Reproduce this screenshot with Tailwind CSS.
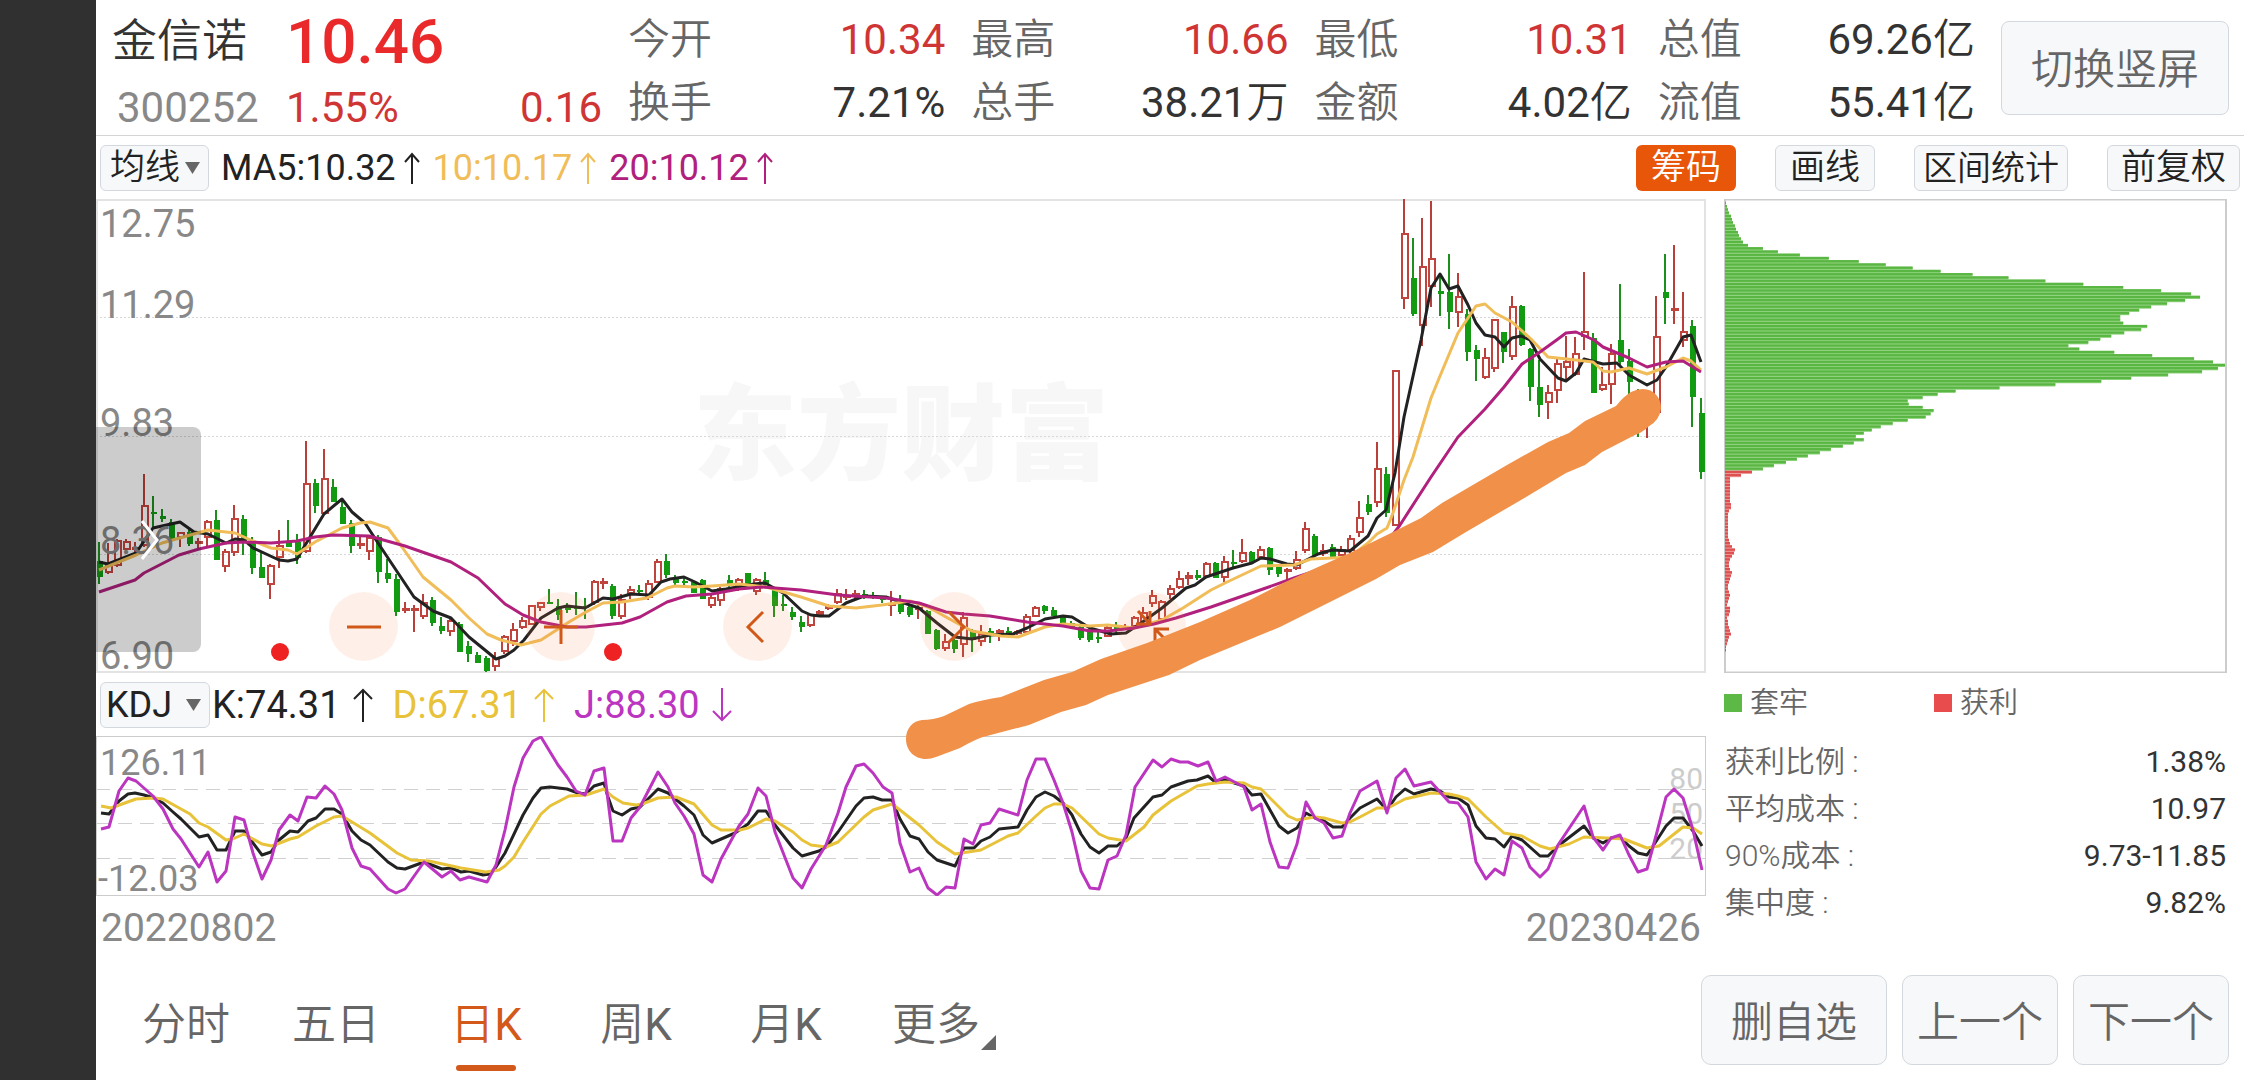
<!DOCTYPE html>
<html lang="zh-CN">
<head>
    <meta charset="UTF-8">
    <meta name="viewport" content="width=device-width, initial-scale=1.0">
    <title>金信诺 300252 - 日K</title>
    <script src="https://cdn.jsdelivr.net/npm/@tailwindcss/browser@4"></script>
    <style>
        body {
            font-family: Roboto, "Noto Sans CJK SC", sans-serif;
        }
    </style>
</head>
<body class="flex min-h-screen bg-white leading-none text-[#333]">

    <!-- 左侧黑边 -->
    <aside class="w-24 shrink-0 bg-[#303030]"></aside>

    <main class="flex min-w-0 flex-1 flex-col">

        <!-- 行情头部 -->
        <header class="flex h-[136px] items-center border-b border-[#d4d4d4] pr-[15px] pl-4">
            <div class="grid w-[490px] shrink-0 grid-cols-[174px_1fr_auto] grid-rows-[72px_60px] items-center pt-2 text-[42px]">
                <h1 class="text-[45px] font-[350]">金信诺</h1>
                <div class="col-span-2 text-[62px] font-medium text-[#ea2a2a]">10.46</div>
                <div class="pl-[5px] text-[#888]">300252</div>
                <div class="text-[#cf3535]">1.55%</div>
                <div class="text-[#cf3535]">0.16</div>
            </div>
            <dl class="ml-[26px] grid flex-1 grid-cols-4 grid-rows-[63px_63px] gap-x-[26px] pt-2 text-[42px]">
                <div class="flex items-center justify-between"><dt class="font-[350] text-[#666]">今开</dt><dd class="text-[#cf3535]">10.34</dd></div>
                <div class="flex items-center justify-between"><dt class="font-[350] text-[#666]">最高</dt><dd class="text-[#cf3535]">10.66</dd></div>
                <div class="flex items-center justify-between"><dt class="font-[350] text-[#666]">最低</dt><dd class="text-[#cf3535]">10.31</dd></div>
                <div class="flex items-center justify-between"><dt class="font-[350] text-[#666]">总值</dt><dd>69.26<span class="font-[350]">亿</span></dd></div>
                <div class="flex items-center justify-between"><dt class="font-[350] text-[#666]">换手</dt><dd>7.21%</dd></div>
                <div class="flex items-center justify-between"><dt class="font-[350] text-[#666]">总手</dt><dd>38.21<span class="font-[350]">万</span></dd></div>
                <div class="flex items-center justify-between"><dt class="font-[350] text-[#666]">金额</dt><dd>4.02<span class="font-[350]">亿</span></dd></div>
                <div class="flex items-center justify-between"><dt class="font-[350] text-[#666]">流值</dt><dd>55.41<span class="font-[350]">亿</span></dd></div>
            </dl>
            <button class="ml-[26px] h-[94px] w-[228px] shrink-0 rounded-lg border border-[#d3d8de] bg-[#f7f8fa] pt-1 text-[42px] font-[350] text-[#666]">切换竖屏</button>
        </header>

        <!-- 均线指标与工具按钮 -->
        <div class="flex h-[63px] items-center pr-1 pl-1">
            <div class="relative">
                <select aria-label="主图指标" class="h-[46px] w-[109px] appearance-none rounded-md border border-[#d3d8de] bg-[#f7f8fa] pl-[9px] text-[35px] leading-[44px] font-[350] text-[#222]">
                    <option>均线</option>
                </select>
                <svg class="pointer-events-none absolute top-[17px] right-[9px] h-3 w-[15px]" viewBox="0 0 15 12"><path d="M0 0h15L7.500 12z" fill="#666"/></svg>
            </div>
            <div class="ml-3 flex items-center text-[36px]">
                <span class="text-[#222]">MA5:10.32</span>
                <svg class="mr-[13px] ml-2 h-8 w-4" viewBox="0 0 16 32" fill="none" stroke="#222" stroke-width="2"><path d="M8 32V2M1 10l7-8 7 8"/></svg>
                <span class="text-[#f0bd58]">10:10.17</span>
                <svg class="mr-[13px] ml-2 h-8 w-4" viewBox="0 0 16 32" fill="none" stroke="#f0bd58" stroke-width="2"><path d="M8 32V2M1 10l7-8 7 8"/></svg>
                <span class="text-[#b0207c]">20:10.12</span>
                <svg class="ml-2 h-8 w-4" viewBox="0 0 16 32" fill="none" stroke="#b0207c" stroke-width="2"><path d="M8 32V2M1 10l7-8 7 8"/></svg>
            </div>
            <div class="ml-auto flex gap-[39px] text-[35px] font-[350] text-[#222]">
                <button class="h-[46px] w-[100px] rounded-md bg-[#e8560a] text-white">筹码</button>
                <button class="h-[46px] w-[100px] rounded-md border border-[#d3d8de] bg-[#f7f8fa]">画线</button>
                <button class="h-[46px] w-[154px] rounded-md border border-[#d3d8de] bg-[#f7f8fa] text-[34px]">区间统计</button>
                <button class="h-[46px] w-[133px] rounded-md border border-[#d3d8de] bg-[#f7f8fa]">前复权</button>
            </div>
        </div>

        <div class="grid grid-cols-[1610fr_503fr] gap-x-[18px] pr-[17px]">

            <!-- 左侧: K线 + KDJ -->
            <section class="min-w-0">
                <div class="relative">
                    <div class="relative h-[474px]">
                        <div class="absolute inset-x-0 top-[186px] text-center text-[104px] font-black text-[#f7f7f7]">东方财富</div>
                        <svg id="kline" class="absolute inset-0 h-full w-full" viewBox="0 0 1610 474" preserveAspectRatio="none" fill="none">
                            <g stroke="#d8d8d8" stroke-dasharray="2 2"><path d="M0 118.500H1610M0 237.500H1610M0 355.500H1610"/></g>
                            <rect x="1" y="1" width="1608" height="472" stroke="#e3e3e3" stroke-width="2"/>
                        </svg>
                        <div class="absolute inset-0 text-[38px] text-[#888]">
                            <span class="absolute top-[6px] left-1">12.75</span>
                            <span class="absolute top-[87px] left-1">11.29</span>
                            <span class="absolute top-[205px] left-1">9.83</span>
                            <span class="absolute top-[323px] left-1">8.36</span>
                            <span class="absolute top-[438px] left-1">6.90</span>
                        </div>
                        <button aria-label="展开" class="absolute top-[228px] left-0 flex h-[225px] w-[105px] items-center rounded-r-lg bg-black/20 pl-[45px]">
                            <svg class="h-10 w-[18px]" viewBox="0 0 18 40" fill="none" stroke="#fff" stroke-width="3"><path d="M1 1l15 19L1 39"/></svg>
                        </button>
                        <span class="absolute top-[444px] left-[175px] size-[18px] rounded-full bg-[#ee2222]"></span>
                        <span class="absolute top-[444px] left-[508px] size-[18px] rounded-full bg-[#ee2222]"></span>
                        <!-- 缩放 / 平移 -->
                        <div class="absolute top-[393px] left-[233px] flex gap-[128px] text-[#d0591a]">
                            <button aria-label="缩小" class="flex size-[69px] items-center justify-center rounded-full bg-[#f58040]/12">
                                <svg class="size-[34px]" viewBox="0 0 34 34" fill="none" stroke="currentColor" stroke-width="3"><path d="M0 17h34"/></svg>
                            </button>
                            <button aria-label="放大" class="flex size-[69px] items-center justify-center rounded-full bg-[#f58040]/12">
                                <svg class="size-[34px]" viewBox="0 0 34 34" fill="none" stroke="currentColor" stroke-width="3"><path d="M0 17h34M17 0v34"/></svg>
                            </button>
                            <button aria-label="左移" class="flex size-[69px] items-center justify-center rounded-full bg-[#f58040]/12">
                                <svg class="size-[34px]" viewBox="0 0 34 34" fill="none" stroke="currentColor" stroke-width="3"><path d="M22 2L7 17l15 15"/></svg>
                            </button>
                            <button aria-label="右移" class="flex size-[69px] items-center justify-center rounded-full bg-[#f58040]/12">
                                <svg class="size-[34px]" viewBox="0 0 34 34" fill="none" stroke="currentColor" stroke-width="3"><path d="M11 2l15 15-15 15"/></svg>
                            </button>
                            <button aria-label="还原" class="flex size-[69px] items-center justify-center rounded-full bg-[#f58040]/12">
                                <svg class="size-[34px]" viewBox="0 0 34 34" fill="none" stroke="currentColor" stroke-width="3"><path d="M3 1l11 12M1 14h14V1M20 33V19h14M20 19l13 13"/></svg>
                            </button>
                        </div>
                    </div>

                    <!-- KDJ 指标行 -->
                    <div class="flex h-[63px] items-center pl-1 text-[38px]">
                        <div class="relative">
                            <select aria-label="副图指标" class="h-[46px] w-[110px] appearance-none rounded-md border border-[#d3d8de] bg-[#f7f8fa] pl-[5px] text-[36px] leading-[44px] text-[#222]">
                                <option>KDJ</option>
                            </select>
                            <svg class="pointer-events-none absolute top-[17px] right-[9px] h-3 w-[15px]" viewBox="0 0 15 12"><path d="M0 0h15L7.500 12z" fill="#666"/></svg>
                        </div>
                        <span class="ml-[2px] text-[#222]">K:74.31</span>
                        <svg class="mr-5 ml-3 h-[34px] w-5" viewBox="0 0 20 34" fill="none" stroke="#222" stroke-width="2"><path d="M10 34V2M1 11l9-9 9 9"/></svg>
                        <span class="text-[#e8c238]">D:67.31</span>
                        <svg class="mr-5 ml-3 h-[34px] w-5" viewBox="0 0 20 34" fill="none" stroke="#e8c238" stroke-width="2"><path d="M10 34V2M1 11l9-9 9 9"/></svg>
                        <span class="text-[#bb35c0]">J:88.30</span>
                        <svg class="ml-3 h-[34px] w-5" viewBox="0 0 20 34" fill="none" stroke="#bb35c0" stroke-width="2"><path d="M10 0v32M1 23l9 9 9-9"/></svg>
                    </div>

                    <div class="relative h-40">
                        <div class="absolute inset-0 text-[36px] text-[#888]">
                            <span class="absolute top-[9px] left-1">126.11</span>
                            <span class="absolute top-[125px] left-[2px]">-12.03</span>
                        </div>
                        <div class="absolute top-7 right-[3px] flex flex-col gap-[5px] text-[30px] text-[#ccc]">
                            <span>80</span><span>50</span><span>20</span>
                        </div>
                        <svg id="kdj" class="absolute inset-0 h-full w-full" viewBox="0 0 1610 160" preserveAspectRatio="none" fill="none">
                            <path d="M0 53.500H1610M0 87.500H1610M0 122.500H1610" stroke="#d0d0d0" stroke-dasharray="14 8"/>
                            <rect x=".5" y=".5" width="1609" height="159" stroke="#ccc"/>
                        </svg>
                    </div>

                    <!-- 手绘趋势线 -->
                    <svg class="pointer-events-none absolute inset-0 h-full w-full" viewBox="96 199 1610 697" preserveAspectRatio="none">
                        <path fill="#f19149" d="M922 720Q933 720 944 716L969 704Q982 700 1001 697L1044 680 1072 672 1101 659 1147 643 1200 622 1250 600 1283 583 1318 567 1352 552 1387 535 1421 518 1442 503 1507 465 1548 442 1569 433 1585 421 1616 406Q1624 396 1631 392 1637 389 1643 389C1654 389 1661 398 1661 408Q1660 420 1648 427 1643 432 1635 435L1602 452 1585 465 1566 473 1521 500 1466 532 1433 552 1400 565 1376 579 1356 589 1280 627 1200 660 1169 675 1108 695 1086 705 1061 712 1029 725 983 737Q974 740 960 748L936 757Q931 759 926 759C914 759 906 750 906 739 906 728 913 721 922 720Z"/>
                    </svg>
                </div>

                <div class="flex h-16 items-center justify-between px-[5px] text-[39px] text-[#888]">
                    <time datetime="2022-08-02">20220802</time>
                    <time datetime="2023-04-26">20230426</time>
                </div>
            </section>

            <!-- 右侧: 筹码分布 -->
            <section>
                <svg id="chips" class="h-[474px] w-full" viewBox="0 0 504 474" preserveAspectRatio="none" fill="none">
                    <rect x="1" y=".5" width="502" height="473" stroke="#ccc" stroke-width="2"/>
                </svg>
                <div class="flex h-[60px] items-center text-[29px] font-[350] text-[#666]">
                    <div class="flex w-[210px] items-center gap-2"><span class="size-[18px] bg-[#5cb946]"></span>套牢</div>
                    <div class="flex items-center gap-2"><span class="size-[18px] bg-[#e84c4c]"></span>获利</div>
                </div>
                <table class="mt-[5px] w-full text-[30px]">
                    <tbody>
                        <tr class="h-[47px]"><th class="pl-px text-left font-[350] text-[#666]">获利比例 :</th><td class="pr-px text-right">1.38%</td></tr>
                        <tr class="h-[47px]"><th class="pl-px text-left font-[350] text-[#666]">平均成本 :</th><td class="pr-px text-right">10.97</td></tr>
                        <tr class="h-[47px]"><th class="pl-px text-left font-[350] text-[#666]">90%成本 :</th><td class="pr-px text-right">9.73-11.85</td></tr>
                        <tr class="h-[47px]"><th class="pl-px text-left font-[350] text-[#666]">集中度 :</th><td class="pr-px text-right">9.82%</td></tr>
                    </tbody>
                </table>
            </section>
        </div>

        <!-- 底部周期切换 -->
        <footer class="mt-auto flex h-[120px] items-center px-[15px] pb-px text-[#666]">
            <nav class="flex h-full text-[44px] font-[350]">
                <button class="w-[150px] pt-[10px]">分时</button>
                <button class="w-[150px] pt-[10px]">五日</button>
                <button class="relative w-[150px] pt-[10px] text-[#d2591a]">日<span class="font-normal">K</span>
                    <span class="absolute bottom-2 left-[45px] h-[6px] w-[60px] rounded-full bg-[#d2591a]"></span>
                </button>
                <button class="w-[150px] pt-[10px]">周<span class="font-normal">K</span></button>
                <button class="w-[150px] pt-[10px]">月<span class="font-normal">K</span></button>
                <button class="relative w-[150px] pt-[10px]">更多
                    <svg class="absolute right-[15px] bottom-[29px] size-[15px]" viewBox="0 0 15 15"><path d="M15 0v15H0z" fill="#666"/></svg>
                </button>
            </nav>
            <div class="ml-auto flex gap-[15px] text-[42px] font-[350]">
                <button class="h-[90px] w-[186px] rounded-[10px] border border-[#d3d8de] bg-[#f7f8fa] pt-[6px]">删自选</button>
                <button class="h-[90px] w-[156px] rounded-[10px] border border-[#d3d8de] bg-[#f7f8fa] pt-[6px]">上一个</button>
                <button class="h-[90px] w-[156px] rounded-[10px] border border-[#d3d8de] bg-[#f7f8fa] pt-[6px]">下一个</button>
            </div>
        </footer>
    </main>

    <script>
        const NS = 'http://www.w3.org/2000/svg';

        function add(parent, tag, attrs) {
            const el = document.createElementNS(NS, tag);
            for (const k in attrs) el.setAttribute(k, attrs[k]);
            parent.appendChild(el);
        }

        // 每根K线: 涨跌(r/g) 最高 实体上沿 实体下沿 最低
        const candles = `
            g 343 362 378 385,r 344 365 374 375,r 340 341 367 368,r 340 342 351 352,r 343 348 350 356,r 275 306 347 348,
            g 297 313 315 328,g 310 317 320 323,g 320 323 340 340,r 333 333 339 348,g 330 333 345 347,r 339 342 344 350,
            r 321 322 339 347,g 311 321 361 361,r 350 352 368 373,r 306 319 354 357,g 316 320 343 356,g 338 344 369 375,
            g 354 368 379 379,r 365 366 386 400,r 331 346 359 369,g 321 343 348 348,g 335 343 359 365,r 242 284 353 354,
            g 280 284 307 314,r 250 279 315 315,g 280 288 303 303,g 303 308 325 325,g 321 324 347 354,r 338 344 345 350,
            r 337 338 353 361,g 336 338 373 384,g 360 374 380 384,g 375 380 413 417,r 403 409 410 414,r 406 409 412 433,
            r 395 403 418 420,g 398 401 424 427,g 418 427 432 435,r 418 421 433 437,g 423 425 453 453,g 442 447 455 463,
            g 453 456 464 464,g 457 459 472 473,r 453 459 468 472,r 436 437 453 455,r 424 430 443 447,r 418 421 429 430,
            r 406 406 426 426,r 403 403 409 412,g 390 403 405 405,g 400 407 416 421,g 404 408 411 414,g 393 407 410 416,
            g 399 407 409 420,r 381 382 404 406,r 379 382 385 390,g 385 387 417 420,r 395 400 418 420,r 387 390 395 400,
            g 386 391 393 395,r 381 384 399 401,r 360 362 384 384,g 355 362 376 379,g 376 378 384 388,g 378 382 384 386,
            g 383 383 394 394,g 380 381 400 400,r 394 398 407 409,r 388 389 402 407,g 376 381 385 389,r 379 380 388 392,
            g 374 374 386 386,r 379 380 393 396,g 373 381 386 387,g 391 391 407 418,g 396 405 407 412,g 408 413 418 421,
            g 417 423 428 433,r 415 415 427 428,r 411 412 416 418,r 405 407 410 411,r 390 394 404 405,r 390 396 399 401,
            r 391 394 398 399,g 391 395 397 400,g 393 396 398 400,g 397 399 401 404,r 392 404 406 417,g 396 403 413 415,
            g 405 408 416 418,r 404 408 410 420,g 411 412 435 435,g 430 431 450 451,r 435 442 450 452,g 440 441 450 454,
            r 413 418 446 458,g 430 431 441 453,r 426 434 443 447,g 429 432 434 444,r 430 431 434 442,g 428 432 434 438,
            r 431 432 434 436,r 415 417 434 435,r 407 408 418 418,g 406 407 412 415,g 408 411 417 417,g 417 418 424 425,
            g 422 424 429 430,g 427 428 439 441,g 430 433 441 443,g 432 438 440 444,r 427 428 438 438,g 423 428 432 434,
            r 425 427 430 431,r 417 418 428 428,r 408 413 427 427,r 391 396 405 408,r 401 402 421 422,r 386 389 396 400,
            r 372 379 389 390,r 373 376 380 386,g 371 376 379 381,r 363 364 378 378,g 363 364 379 379,r 357 362 379 383,
            g 351 363 365 368,r 340 353 363 364,g 352 353 363 363,r 347 350 359 360,g 348 349 371 376,g 367 368 375 378,
            r 369 370 373 381,r 352 360 370 371,r 323 329 352 354,g 335 337 357 357,r 345 351 355 357,g 345 348 359 360,
            r 347 350 357 358,r 336 339 352 354,r 302 318 334 338,g 296 305 313 316,r 243 269 304 308,g 268 275 314 318,
            r 171 171 327 327,r 0 34 100 110,g 39 79 115 117,r 19 67 127 147,r 2 59 88 108,g 76 92 95 117,
            g 55 93 113 130,r 74 97 114 128,g 110 115 153 162,g 146 151 160 182,r 149 158 179 180,r 120 120 170 173,
            g 133 133 153 164,r 97 107 158 161,g 106 107 146 147,g 149 150 188 202,g 161 188 206 218,r 186 193 204 220,
            r 158 164 192 204,r 137 162 169 183,r 138 154 176 177,r 73 132 138 151,g 134 139 194 194,r 168 185 191 192,
            r 145 154 186 205,g 85 141 163 167,g 150 162 183 198,g 190 200 230 238,r 195 200 225 239,r 97 137 214 215,
            g 55 93 99 125,r 46 109 111 125,r 93 132 142 148,g 121 127 198 228,g 199 214 273 280`;

        const kline = document.getElementById('kline');
        candles.trim().split(',').forEach((row, i) => {
            const [dir, ...v] = row.trim().split(' ');
            const [hi, top, bottom, lo] = v.map(Number);
            const x = 3 + 9 * i;
            if (dir === 'g') {
                add(kline, 'path', { d: `M${x} ${hi}V${lo}`, stroke: '#1c8f1c', 'stroke-width': 2 });
                add(kline, 'rect', { x: x - 2, y: top, width: 6, height: Math.max(bottom - top, 2), fill: '#129a12' });
            } else {
                add(kline, 'path', { d: `M${x} ${hi}V${top}M${x} ${bottom}V${lo}`, stroke: '#b8403a', 'stroke-width': 2 });
                add(kline, 'rect', { x: x - 2, y: top + 1, width: 6, height: Math.max(bottom - top - 2, 1), stroke: '#c0443e', 'stroke-width': 2 });
            }
        });

        // 折线
        function line(svg, points, color) {
            add(svg, 'polyline', { points, stroke: color, 'stroke-width': 3, 'stroke-linejoin': 'round' });
        }

        const ma5 = '3,363 12,365 40,354 57,329 84,323 98,333 112,335 130,344 139,340 148,341 157,349 183,361 192,362 201,360 208,348 228,315 246,300 256,313 269,324 282,344 318,398 337,412 355,419 373,438 400,460 409,457 418,451 428,441 445,419 462,409 471,407 489,409 507,399 517,400 535,395 553,396 565,383 574,380 588,378 599,383 616,392 630,390 658,385 669,384 687,394 706,412 715,416 724,417 733,417 750,404 768,397 790,398 823,409 841,424 859,438 876,440 894,436 917,435 931,429 949,420 967,417 976,418 994,429 1015,435 1030,434 1048,422 1066,409 1090,389 1099,386 1110,378 1137,369 1156,364 1165,359 1174,360 1191,365 1201,366 1222,355 1236,351 1254,352 1272,337 1281,319 1290,311 1299,274 1308,218 1325,141 1335,89 1344,75 1353,90 1362,87 1372,106 1380,124 1389,136 1399,138 1408,148 1416,139 1425,137 1434,141 1444,160 1462,179 1470,182 1480,174 1488,160 1507,165 1521,164 1533,176 1551,186 1561,181 1570,168 1587,138 1595,136 1605,163';
        const ma10 = '3,371 40,356 66,344 112,331 139,334 157,342 175,349 192,351 201,355 219,343 246,329 264,324 274,323 292,329 306,348 327,378 355,401 373,419 391,435 405,441 425,446 445,441 473,423 490,413 507,404 526,403 551,399 571,389 579,387 598,388 616,387 643,385 670,388 705,398 733,407 760,409 786,406 814,402 832,408 859,423 876,432 905,437 922,438 949,428 967,425 994,427 1012,426 1038,429 1066,421 1087,409 1115,391 1129,384 1165,367 1198,366 1215,360 1236,359 1254,358 1272,344 1281,335 1291,329 1297,314 1308,281 1317,258 1335,199 1344,177 1362,134 1380,107 1389,105 1399,114 1416,123 1435,140 1452,158 1471,160 1497,163 1507,172 1515,173 1533,169 1551,175 1570,168 1587,159 1595,162 1605,171';
        const ma20 = '3,393 39,381 48,374 83,356 103,350 130,344 148,343 175,344 201,342 219,338 237,336 273,337 309,347 355,363 382,379 409,405 427,416 445,423 471,428 490,428 526,424 544,418 571,403 590,397 616,395 643,390 665,388 705,391 742,396 790,399 823,404 850,413 868,415 894,417 931,423 967,427 994,432 1012,432 1038,429 1058,425 1080,419 1115,408 1167,390 1198,379 1240,365 1290,345 1304,326 1335,278 1362,238 1389,210 1408,188 1426,165 1444,153 1462,140 1470,134 1480,133 1498,141 1507,148 1533,159 1551,168 1570,163 1587,162 1605,173';
        line(kline, ma5, '#222');
        line(kline, ma10, '#f0bd58');
        line(kline, ma20, '#b0207c');

        const k = '5,77 13,78 23,65 32,58 39,57 48,59 58,62 67,67 77,76 85,83 103,101 112,99 121,114 130,114 139,95 148,95 166,119 175,116 183,104 194,95 202,96 212,85 220,82 229,73 238,73 246,78 256,95 265,104 274,109 292,126 301,132 309,133 328,126 346,133 355,132 365,136 373,135 387,139 394,138 400,131 409,117 427,79 437,62 445,52 454,51 471,53 482,57 490,58 498,50 508,47 512,61 517,75 526,79 535,73 544,71 553,62 562,53 572,57 588,70 598,79 607,99 616,107 639,97 652,88 662,75 670,75 679,89 697,112 706,120 723,115 730,111 742,96 760,70 768,62 777,61 786,64 796,64 804,83 814,100 823,103 832,116 841,124 859,130 868,112 878,112 885,105 894,101 903,93 922,91 931,74 940,61 949,56 958,60 967,67 976,79 985,98 994,111 1003,117 1012,110 1021,110 1030,102 1038,82 1057,61 1066,59 1075,51 1092,45 1101,44 1112,40 1118,45 1129,44 1148,50 1156,59 1165,58 1174,74 1183,90 1192,97 1201,92 1210,77 1219,82 1228,85 1237,91 1246,91 1254,82 1264,72 1281,63 1291,74 1300,61 1309,53 1318,58 1335,53 1344,55 1353,61 1362,62 1372,69 1380,90 1390,102 1399,103 1408,111 1416,100 1426,104 1444,120 1452,120 1462,110 1488,90 1497,102 1507,107 1515,102 1524,101 1533,110 1542,117 1551,119 1561,104 1570,90 1578,82 1587,82 1597,95 1606,110';
        const d = '5,70 15,72 40,63 58,62 67,63 94,78 103,87 112,91 130,104 139,102 148,98 166,108 176,110 194,103 202,101 220,90 238,81 246,80 256,86 274,97 301,117 315,124 333,125 365,132 390,136 403,134 409,130 418,121 427,106 445,78 454,70 473,60 490,59 508,53 517,61 527,67 540,69 546,68 562,62 580,61 598,68 616,89 625,94 644,94 652,92 670,83 679,85 697,96 706,104 715,109 730,111 742,106 768,81 777,74 796,68 804,74 823,89 841,106 859,118 885,114 912,100 922,97 940,80 949,72 958,68 967,68 976,72 1003,98 1012,102 1030,105 1048,91 1057,79 1075,65 1101,50 1112,48 1129,46 1148,47 1156,51 1165,53 1192,80 1201,84 1219,81 1228,82 1246,87 1254,86 1264,81 1281,72 1292,72 1309,63 1335,57 1353,58 1362,60 1372,63 1390,81 1408,97 1426,100 1444,110 1454,113 1473,108 1488,101 1511,102 1528,103 1551,112 1563,110 1587,91 1597,92 1606,98';
        const j = '5,93 13,91 23,55 32,42 40,45 57,60 67,73 77,93 85,103 103,131 112,116 121,146 130,135 139,81 148,84 157,117 166,143 175,124 183,94 194,79 202,85 211,61 220,62 229,50 238,58 246,74 256,112 265,130 274,133 292,153 300,157 309,153 328,126 346,141 355,135 364,144 373,141 391,146 400,129 409,94 418,51 427,22 437,5 445,1 462,29 471,41 480,55 489,59 498,35 508,32 517,105 526,105 535,82 544,71 562,36 572,51 579,67 588,80 598,98 607,139 616,146 625,123 643,90 652,78 662,52 670,60 679,96 697,142 706,152 715,133 730,109 742,77 750,51 760,30 768,28 777,37 787,51 796,57 804,107 814,136 823,132 832,152 841,159 850,151 859,152 868,103 877,108 885,89 894,87 903,73 922,79 931,44 940,23 949,23 958,44 967,67 976,96 985,135 994,152 1003,153 1012,124 1021,120 1030,99 1039,51 1057,24 1066,31 1075,23 1084,26 1092,26 1102,30 1112,26 1120,45 1129,41 1148,51 1156,74 1165,68 1174,106 1183,131 1192,132 1201,108 1210,66 1219,82 1228,87 1237,102 1246,100 1254,77 1264,55 1281,45 1291,77 1300,42 1309,33 1318,50 1335,46 1353,66 1362,67 1372,81 1380,126 1390,143 1399,133 1408,139 1416,105 1426,112 1434,131 1444,141 1452,133 1462,109 1488,70 1497,101 1507,114 1515,102 1524,99 1533,119 1542,136 1551,133 1561,96 1570,61 1578,53 1587,62 1597,94 1606,134';
        const kdj = document.getElementById('kdj');
        line(kdj, k, '#222');
        line(kdj, d, '#e8c238');
        line(kdj, j, '#bb35c0');

        // 筹码分布: 套牢盘(绿) 与 获利盘(红)
        const locked = [1, 2, 3, 4, 6, 7, 8, 10, 11, 13, 14, 16, 18, 23, 38, 53, 75, 104, 134, 161, 188, 216, 248, 284, 321, 359, 399, 437, 467, 476, 461, 443, 427, 415, 405, 396, 396, 399, 423, 417, 400, 387, 376, 364, 344, 355, 390, 428, 470, 489, 501, 494, 478, 444, 407, 377, 331, 275, 231, 213, 198, 183, 184, 198, 209, 206, 201, 183, 168, 156, 147, 139, 131, 139, 129, 118, 106, 95, 83, 72, 61, 49, 38];
        const profit = [27, 16, 5, 5, 5, 5, 5, 5, 5, 5, 6, 6, 4, 3, 3, 3, 3, 3, 3, 3, 3, 4, 5, 7, 10, 9, 7, 5, 4, 4, 5, 7, 6, 5, 4, 3, 3, 4, 5, 4, 3, 2, 5, 5, 4, 2, 3, 3, 4, 5, 6, 4, 3, 2, 1, 1];
        const chips = document.getElementById('chips');
        const step = 3.24;
        locked.concat(profit).forEach((w, i) => {
            const green = i < locked.length;
            const y = 2.8 + i * step;
            add(chips, 'rect', { x: 1, y: y, width: w, height: step, fill: green ? '#8ed27c' : '#f09a9a' });
            add(chips, 'rect', { x: 1, y: y, width: w, height: 2.3, fill: green ? '#59b642' : '#dc5050' });
        });
    </script>

</body>
</html>
